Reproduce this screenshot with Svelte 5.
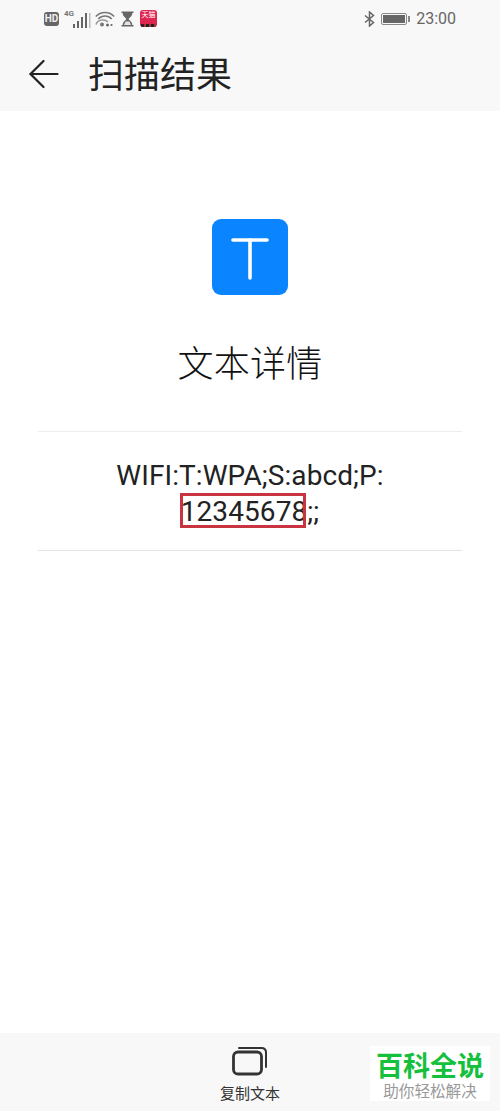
<script>
  const title = "扫描结果";
</script>

<main>
  <header>
    <div class="status">
      <div class="status-left">
        <span class="hd">HD</span>
        <svg class="signal" width="28" height="20" viewBox="0 0 28 20">
          <text x="0" y="7" class="four-g">4G</text>
          <rect x="9" y="15" width="2" height="4" fill="#666" />
          <rect x="13" y="12" width="2" height="7" fill="#666" />
          <rect x="17" y="8" width="2" height="11" fill="#666" />
          <rect x="21" y="4" width="2" height="15" fill="#666" />
          <rect x="25" y="4" width="1.5" height="15" fill="#bbb" />
        </svg>
        <svg class="wifi" width="20" height="16" viewBox="0 0 20 16" fill="none" stroke="#777" stroke-width="1.5">
          <path d="M0.8 5.6C5.5 0 14.5 0 19.2 5.6" />
          <path d="M3.2 8C7 4 13 4 16.8 8" />
          <path d="M1 13.5C2.5 8.5 10 7.5 13 11" stroke="#999" />
          <circle cx="7" cy="13.5" r="2" fill="#777" stroke="none" />
          <circle cx="12.5" cy="14" r="1.5" fill="#666" stroke="none" />
          <circle cx="16.5" cy="14" r="1.1" fill="#666" stroke="none" />
        </svg>
        <svg class="hourglass" width="13" height="16" viewBox="0 0 13 16">
          <path d="M0.5 0.5H12.5V2H11.3C11.3 5.5 8.4 6.5 7.6 8C8.4 9.5 11.3 10.5 11.3 14H12.5V15.5H0.5V14H1.7C1.7 10.5 4.6 9.5 5.4 8C4.6 6.5 1.7 5.5 1.7 2H0.5Z" fill="#666" />
          <path d="M4.5 10.5H8.5L10 14H3Z" fill="#e4e4e4" />
        </svg>
        <div class="tmall">
          <span>天猫</span>
          <i></i>
        </div>
      </div>
      <div class="status-right">
        <svg width="11" height="16" viewBox="0 0 11 16" fill="none" stroke="#666" stroke-width="1.5">
          <path d="M1 4.5L9.5 11.5L5.5 15V1L9.5 4.5L1 11.5" />
        </svg>
        <div class="battery"><b></b></div>
        <span class="time">23:00</span>
      </div>
    </div>
    <div class="toolbar">
      <svg width="30" height="30" viewBox="0 0 30 30" fill="none" stroke="#222" stroke-width="2.2" stroke-linecap="round" stroke-linejoin="round">
        <path d="M1.5 15H28.5" />
        <path d="M14.5 2L1.5 15L14.5 28" />
      </svg>
      <h1>{title}</h1>
    </div>
  </header>

  <section class="content">
    <div class="app-icon">
      <svg width="38" height="42" viewBox="0 0 38 42" fill="none" stroke="#fff" stroke-width="3.6" stroke-linecap="round">
        <path d="M2 2H36" />
        <path d="M19 2V40" />
      </svg>
    </div>
    <h2>文本详情</h2>
    <div class="result">
      WIFI:T:WPA;S:abcd;P:<br /><span class="mark">12345678</span>;;
    </div>
  </section>

  <footer>
    <div class="copy">
      <svg width="36" height="30" viewBox="0 0 36 30" fill="none" stroke="#333" stroke-linejoin="round">
        <rect x="1.5" y="6" width="28" height="22" rx="4.5" stroke-width="2.8" />
        <path d="M7 2H29.5C32.5 2 34 3.5 34 6.5V21" stroke-width="2" stroke-linecap="round" />
      </svg>
      <span>复制文本</span>
    </div>
    <div class="watermark">
      <strong>百科全说</strong>
      <span>助你轻松解决</span>
    </div>
  </footer>
</main>

<style>
  :global(body) {
    margin: 0;
    background: #fff;
  }

  main {
    width: 500px;
    height: 1111px;
    display: flex;
    flex-direction: column;
    font-family: "Roboto", "Noto Sans CJK SC", sans-serif;
    color: #222;
    overflow: hidden;
  }

  header {
    height: 111px;
    background: #f8f8f8;
    flex: none;
  }

  .status {
    height: 37px;
    box-sizing: border-box;
    padding: 0 44px;
    display: flex;
    justify-content: space-between;
    align-items: center;
  }

  .status-left {
    display: flex;
    align-items: center;
    gap: 3px;
  }

  .hd {
    width: 15px;
    height: 14px;
    background: #666;
    border-radius: 3px;
    color: #f0f0f0;
    font-size: 10px;
    font-weight: 700;
    line-height: 14px;
    text-align: center;
  }

  .four-g {
    font-size: 8px;
    font-weight: 700;
    fill: #777;
    font-family: "Roboto", sans-serif;
  }

  .signal {
    margin: 0 0 0 2px;
  }

  .hourglass {
    margin: 0 3px 0 3px;
  }

  .tmall {
    width: 17px;
    height: 17px;
    border-radius: 3px;
    background: #dd2550;
    position: relative;
    color: #fff;
    font-size: 7px;
    line-height: 11px;
    text-align: center;
    overflow: hidden;
  }

  .tmall span {
    display: block;
  }

  .tmall i {
    position: absolute;
    left: 1px;
    right: 1px;
    bottom: 0;
    height: 3px;
    background: repeating-linear-gradient(90deg, #222 0 3px, #a33 3px 5px);
  }

  .status-right {
    display: flex;
    align-items: center;
    gap: 6px;
  }

  .battery {
    width: 26px;
    height: 12px;
    border: 1px solid #888;
    border-radius: 2px;
    padding: 1px;
    box-sizing: border-box;
    position: relative;
    margin-right: 3px;
  }

  .battery b {
    display: block;
    height: 100%;
    background: #666;
  }

  .battery::after {
    content: "";
    position: absolute;
    right: -4px;
    top: 2px;
    width: 2px;
    height: 6px;
    background: #888;
  }

  .time {
    font-size: 16px;
    color: #666;
  }

  .toolbar {
    height: 74px;
    padding-left: 29px;
    display: flex;
    align-items: center;
    gap: 29px;
  }

  h1 {
    margin: 0;
    padding-top: 3px;
    font-size: 36px;
    font-weight: 400;
    line-height: 50px;
    color: #222;
  }

  .content {
    flex: 1;
    display: flex;
    flex-direction: column;
    align-items: center;
    padding: 108px 38px 0;
  }

  .app-icon {
    width: 76px;
    height: 76px;
    box-sizing: border-box;
    padding-top: 4px;
    background: #0a84ff;
    border-radius: 9px;
    display: flex;
    align-items: center;
    justify-content: center;
  }

  h2 {
    margin: 45px 0 0;
    font-size: 36px;
    font-weight: 300;
    line-height: 50px;
    color: #111;
    letter-spacing: 0.3px;
  }

  .result {
    align-self: stretch;
    margin-top: 41px;
    padding: 26px 0 20px;
    border-top: 1px solid #eee;
    border-bottom: 1px solid #e4e4e4;
    font-size: 28px;
    letter-spacing: 0.08px;
    line-height: 36px;
    text-align: center;
    color: #222;
  }

  .mark {
    position: relative;
  }

  /* red annotation drawn over the digits */
  .mark::after {
    content: "";
    position: absolute;
    left: -1px;
    right: 1px;
    top: -2px;
    height: 35px;
    border: 3px solid #c8343f;
    box-sizing: border-box;
  }

  footer {
    height: 78px;
    background: #f8f8f8;
    flex: none;
    position: relative;
    display: flex;
    justify-content: center;
  }

  .copy {
    display: flex;
    flex-direction: column;
    align-items: center;
    padding-top: 13px;
    font-size: 15px;
    color: #333;
    gap: 6px;
  }

  .watermark {
    position: absolute;
    left: 370px;
    top: 13px;
    width: 120px;
    height: 55px;
    box-sizing: border-box;
    padding-top: 4px;
    background: #fff;
    display: flex;
    flex-direction: column;
    align-items: center;
  }

  .watermark strong {
    font-size: 27px;
    line-height: 34px;
    font-weight: 700;
    color: #14c03c;
  }

  .watermark span {
    font-size: 15.6px;
    line-height: 17px;
    color: #999;
  }
</style>
